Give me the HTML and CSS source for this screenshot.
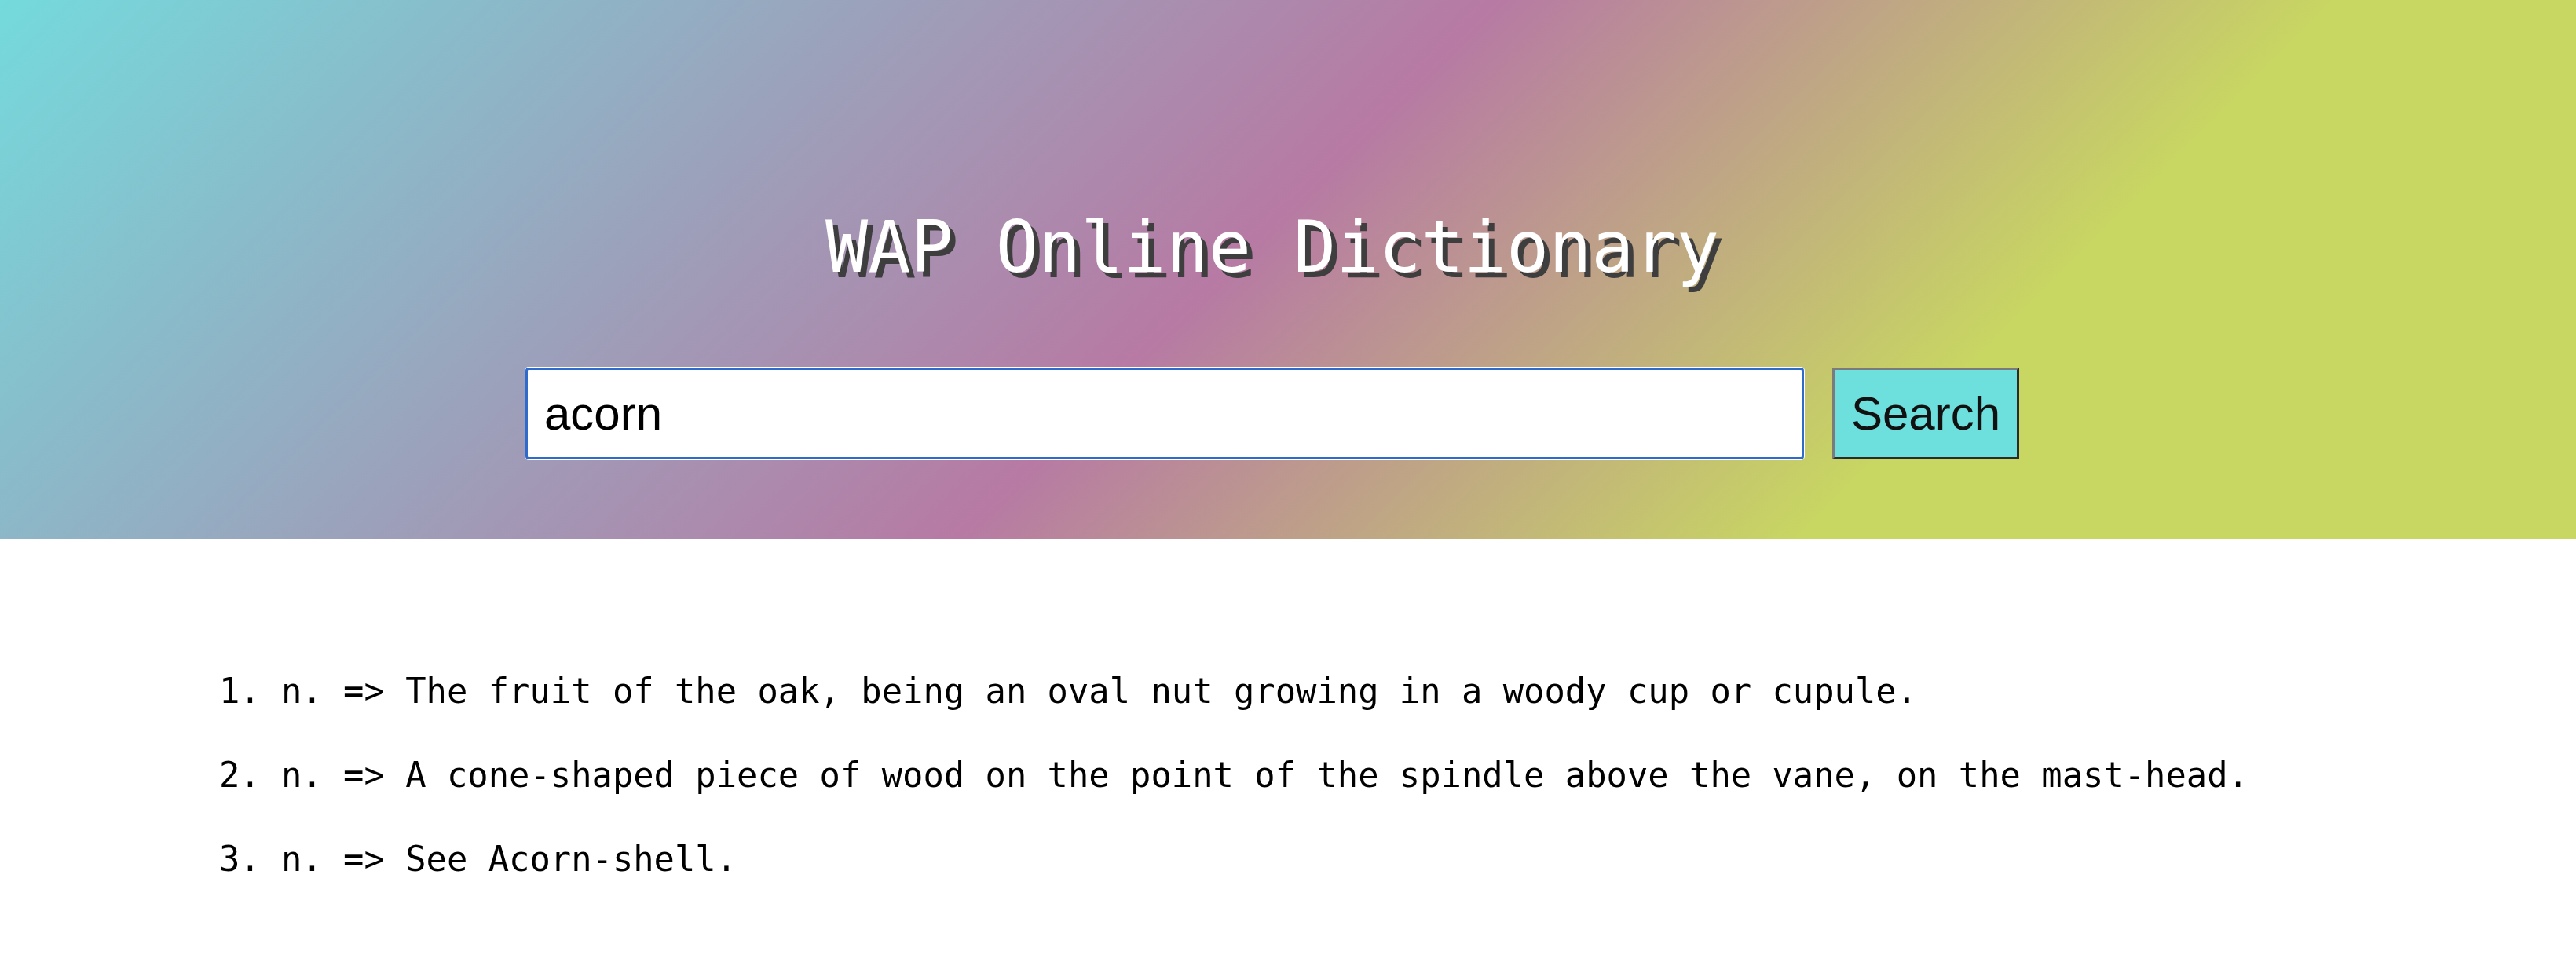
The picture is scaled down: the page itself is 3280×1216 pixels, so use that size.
FILE: index.html
```html
<!DOCTYPE html>
<html lang="en">
<head>
<meta charset="utf-8">
<title>WAP Online Dictionary</title>
<link rel="stylesheet" href="styles.css">
</head>
<body>
<header class="hero">
  <h1 class="title">WAP Online Dictionary</h1>
  <form class="search" onsubmit="return false">
    <input class="search-input" id="word" type="text" value="acorn" autofocus>
    <button class="search-btn" type="submit">Search</button>
  </form>
</header>
<main class="results">
  <ol class="defs">
    <li>n. =&gt; The fruit of the oak, being an oval nut growing in a woody cup or cupule.</li>
    <li>n. =&gt; A cone-shaped piece of wood on the point of the spindle above the vane, on the mast-head.</li>
    <li>n. =&gt; See Acorn-shell.</li>
  </ol>
</main>
<script src="script.js"></script>
</body>
</html>
```
FILE: styles.css
```css
html, body {
  margin: 0;
  padding: 0;
  background: #ffffff;
}

.hero {
  box-sizing: border-box;
  height: 686px;
  padding-top: 261px;
  background: linear-gradient(135deg, #74dadc 0%, #b77aa4 48%, #c8d662 75%, #c8d662 100%);
  display: flex;
  flex-direction: column;
  align-items: center;
}

.title {
  margin: 0;
  font-family: "DejaVu Sans Mono", "Liberation Mono", monospace;
  font-weight: normal;
  font-size: 90px;
  line-height: 108px;
  color: #ffffff;
  text-shadow: 7px 7px 0 #3e3e3e;
  padding-right: 40px;
}

.search {
  margin-top: 99px;
  display: flex;
  align-items: center;
  gap: 36px;
  padding-right: 40px;
}

.search-input {
  box-sizing: border-box;
  width: 1628px;
  height: 117px;
  padding: 0 21px;
  border: 3px solid #2f6bcc;
  border-radius: 4px;
  box-shadow: 0 0 0 1px #ffffff;
  outline: none;
  background: #ffffff;
  color: #000000;
  caret-color: #000000;
  font-family: "Liberation Sans", Arial, sans-serif;
  font-size: 60px;
}

.search-input:focus {
  outline: none;
}

.search-btn {
  box-sizing: border-box;
  width: 238px;
  height: 117px;
  padding: 0;
  border-style: solid;
  border-width: 3px;
  border-color: #7b7b7b #2b2b2b #2b2b2b #7b7b7b;
  background: #6ddfdc;
  color: #111111;
  font-family: "Liberation Sans", Arial, sans-serif;
  font-size: 60px;
}

.results {
  padding-top: 167px;
}

.defs {
  margin: 0;
  padding-left: 358px;
  font-family: "DejaVu Sans Mono", "Liberation Mono", monospace;
  font-size: 43.8px;
  line-height: 53px;
  color: #000000;
}

.defs li {
  margin: 0 0 54px;
}
```
FILE: script.js
```js
var w = document.getElementById('word');
w.focus();
w.setSelectionRange(w.value.length, w.value.length);
```
